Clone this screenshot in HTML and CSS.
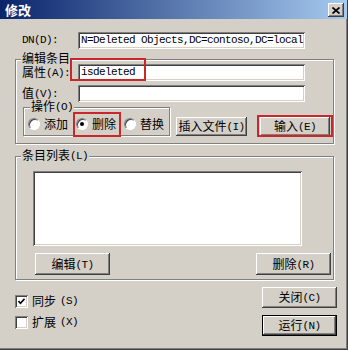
FILE: index.html
```html
<!DOCTYPE html>
<html lang="zh-CN">
<head>
    <meta charset="UTF-8">
    <title>修改</title>
    <link rel="stylesheet" href="styles.css">
</head>
<body>
    <div class="window">
        <div class="titlebar">
            <span class="title">修改</span>
            <span class="close">
                <svg width="8" height="7" viewBox="0 0 8 7"><path d="M0.5 0.5 L7.5 6.5 M7.5 0.5 L0.5 6.5" stroke="#000" stroke-width="1.7" fill="none"/></svg>
            </span>
        </div>

        <div class="field dn-row">
            <label class="lat">DN(D):</label>
            <div class="input lat">N=Deleted Objects,DC=contoso,DC=local</div>
        </div>

        <div class="group edit-group">
            <span class="group-title">编辑条目</span>
            <div class="field attr-row">
                <label>属性<span class="lat">(A):</span></label>
                <div class="input lat">isdeleted</div>
                <span class="mark mark-attr"></span>
            </div>
            <div class="field value-row">
                <label>值<span class="lat">(V):</span></label>
                <div class="input"></div>
            </div>
            <div class="op-row">
                <div class="group op-group">
                    <span class="group-title">操作<span class="lat">(O)</span></span>
                    <label class="radio"><span class="dot"></span>添加</label>
                    <label class="radio checked"><span class="dot"></span>删除<span class="mark mark-radio"></span></label>
                    <label class="radio"><span class="dot"></span>替换</label>
                </div>
                <button class="btn btn-insert">插入文件<span class="lat">(I)</span></button>
                <button class="btn btn-enter">输入<span class="lat">(E)</span><span class="mark mark-btn"></span></button>
            </div>
        </div>

        <div class="group list-group">
            <span class="group-title">条目列表<span class="lat">(L)</span></span>
            <div class="listbox"></div>
            <div class="list-buttons">
                <button class="btn">编辑<span class="lat">(T)</span></button>
                <button class="btn">删除<span class="lat">(R)</span></button>
            </div>
        </div>

        <div class="footer">
            <div class="options">
                <label class="check">
                    <span class="box"><svg width="7" height="7" viewBox="0 0 7 7"><path d="M0.5 3 L2.5 5.2 L6.5 0.8" stroke="#000" stroke-width="1.6" fill="none"/></svg></span>
                    同步<span class="lat">(S)</span>
                </label>
                <label class="check">
                    <span class="box"></span>
                    扩展<span class="lat">(X)</span>
                </label>
            </div>
            <div class="actions">
                <button class="btn">关闭<span class="lat">(C)</span></button>
                <button class="btn btn-default">运行<span class="lat">(N)</span></button>
            </div>
        </div>
    </div>
</body>
</html>
```

FILE: styles.css
```css
body {
    margin: 0;
    background: #d4d0c8;
    font-family: "Noto Sans CJK SC", "DejaVu Sans", sans-serif;
    font-size: 12px;
    color: #000;
}
.window {
    width: 348px;
    height: 350px;
    box-sizing: border-box;
    background: #d4d0c8;
    border-right: 1px solid #404040;
    border-bottom: 1px solid #404040;
    box-shadow: inset -1px -1px #808080;
    overflow: hidden;
}
.lat {
    font-family: "Liberation Mono", monospace;
    font-size: 11px;
    letter-spacing: -0.6px;
}
label .lat, .btn .lat, .group-title .lat {
    vertical-align: 1px;
}

/* title bar */
.titlebar {
    height: 19px;
    box-sizing: border-box;
    padding: 3px 3px 2px 5px;
    display: flex;
    justify-content: space-between;
    align-items: center;
    background: linear-gradient(to right, #0a246a, #a6caf0);
}
.title {
    color: #fff;
    font-weight: bold;
    font-size: 13px;
    line-height: 14px;
}
.close {
    width: 16px;
    height: 14px;
    display: flex;
    align-items: center;
    justify-content: center;
    background: #d4d0c8;
    box-shadow: inset -1px -1px #404040, inset 1px 1px #fff, inset -2px -2px #808080;
}

/* label + edit rows */
.field {
    display: flex;
    align-items: center;
    position: relative;
}
.field label {
    width: 56px;
    line-height: 13px;
}
.input {
    width: 227px;
    height: 17px;
    box-sizing: border-box;
    padding: 2px 0 0 3px;
    background: #fff;
    line-height: 13px;
    white-space: nowrap;
    overflow: hidden;
    box-shadow: inset 1px 1px #808080, inset -1px -1px #fff, inset 2px 2px #404040, inset -2px -2px #d4d0c8;
}
.dn-row {
    margin-top: 13px;
    padding-left: 22px;
}
.attr-row {
    margin-top: 4px;
    padding-left: 6px;
}
.value-row {
    margin-top: 4px;
    padding-left: 6px;
}

/* group boxes */
.group {
    position: relative;
    box-sizing: border-box;
    border: 1px solid #808080;
    box-shadow: inset 1px 1px #fff, 1px 1px #fff;
}
.group-title {
    position: absolute;
    top: -8px;
    left: 5px;
    padding: 0 1px;
    line-height: 12px;
    background: #d4d0c8;
}
.edit-group {
    margin: 10px 0 0 15px;
    width: 319px;
    height: 85px;
}
.op-row {
    display: flex;
    align-items: flex-end;
    margin-top: 5px;
}
.op-group {
    margin-left: 7px;
    width: 147px;
    height: 29px;
    display: flex;
    align-items: center;
    gap: 8px;
    padding: 5px 0 0 4px;
}
.op-group .group-title {
    left: 6px;
}
.radio {
    display: flex;
    align-items: center;
    gap: 4px;
    line-height: 14px;
    position: relative;
}
.dot {
    width: 12px;
    height: 12px;
    box-sizing: border-box;
    border-radius: 50%;
    background: #fff;
    border: 1px solid;
    border-color: #808080 #fff #fff #808080;
    box-shadow: inset 1px 1px #404040;
    display: flex;
    align-items: center;
    justify-content: center;
}
.checked .dot::after {
    content: "";
    width: 4px;
    height: 4px;
    border-radius: 50%;
    background: #000;
}

/* buttons */
.btn {
    position: relative;
    width: 75px;
    height: 22px;
    padding: 0;
    border: none;
    background: #d4d0c8;
    font: inherit;
    color: #000;
    line-height: 14px;
    box-shadow: inset -1px -1px #404040, inset 1px 1px #fff, inset -2px -2px #808080;
}
.btn-insert {
    width: 71px;
    height: 19px;
    margin-left: 6px;
}
.btn-enter {
    width: 70px;
    height: 19px;
    margin-left: 13px;
}
.btn-default {
    box-shadow: inset 0 0 0 1px #000, inset -2px -2px #404040, inset 2px 2px #fff, inset -3px -3px #808080;
}

/* red annotation frames */
.mark {
    position: absolute;
    border: 2px solid #c8282c;
    box-sizing: border-box;
}
.mark-attr {
    left: 54px;
    top: -6px;
    width: 76px;
    height: 23px;
}
.mark-radio {
    left: -3px;
    right: -5px;
    top: -5px;
    bottom: -6px;
}
.mark-btn {
    left: -3px;
    right: -3px;
    top: -2px;
    bottom: -1px;
}

/* entry list */
.list-group {
    margin: 12px 0 0 15px;
    width: 319px;
    height: 124px;
}
.listbox {
    margin: 14px 0 0 17px;
    width: 269px;
    height: 75px;
    background: #fff;
    box-shadow: inset 1px 1px #808080, inset -1px -1px #fff, inset 2px 2px #404040, inset -2px -2px #d4d0c8;
}
.list-buttons {
    display: flex;
    justify-content: space-between;
    margin-top: 7px;
    padding: 0 2px 0 19px;
}

/* bottom */
.footer {
    display: flex;
    justify-content: space-between;
    margin-top: 7px;
    padding: 0 10px 0 15px;
}
.options {
    display: flex;
    flex-direction: column;
    gap: 7px;
    padding-top: 7px;
}
.check {
    display: flex;
    align-items: center;
    gap: 4px;
    line-height: 14px;
}
.box {
    width: 13px;
    height: 13px;
    box-sizing: border-box;
    background: #fff;
    display: flex;
    align-items: center;
    justify-content: center;
    box-shadow: inset 1px 1px #808080, inset -1px -1px #fff, inset 2px 2px #404040, inset -2px -2px #d4d0c8;
}
.actions {
    display: flex;
    flex-direction: column;
    gap: 7px;
}
.actions .btn {
    height: 21px;
}
```
